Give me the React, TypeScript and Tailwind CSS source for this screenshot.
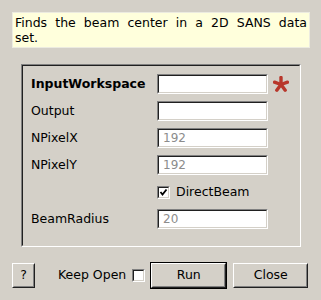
import React from "react";

const font = { fontFamily: '"DejaVu Sans", "Liberation Sans", sans-serif' };

const Sunken = ({ children, className = "" }: { children?: React.ReactNode; className?: string }) => (
  <div className={`border border-t-[#808080] border-l-[#808080] border-b-white border-r-white ${className}`}>
    <div className="h-full w-full border border-t-[#202020] border-l-[#202020] border-b-[#d4d0c8] border-r-[#d4d0c8] bg-white">
      {children}
    </div>
  </div>
);

const Field = ({ value }: { value?: string }) => (
  <Sunken className="w-[111px] h-[20px]">
    <div className="flex h-full items-center pl-[4px] text-[12px] leading-none text-[#8c8c8c]">{value}</div>
  </Sunken>
);

const CheckBox = ({ checked }: { checked?: boolean }) => (
  <Sunken className="w-[13px] h-[13px]">
    {checked && (
      <svg width="9" height="9" viewBox="0 0 9 9" className="block">
        <path d="M1.5 4 L3.5 6.5 L7.5 1.5" fill="none" stroke="#000" strokeWidth="1.8" />
      </svg>
    )}
  </Sunken>
);

const Button = ({ label, className = "", isDefault }: { label: string; className?: string; isDefault?: boolean }) => {
  const inner = (
    <div className="h-full w-full border border-t-white border-l-white border-b-[#202020] border-r-[#202020]">
      <div className="flex h-full w-full items-center justify-center border border-t-[#d4d0c8] border-l-[#d4d0c8] border-b-[#808080] border-r-[#808080] text-[12.5px]">
        {label}
      </div>
    </div>
  );
  if (isDefault) {
    return <div className={`border border-black ${className}`}>{inner}</div>;
  }
  return <div className={className}>{inner}</div>;
};

const Asterisk = () => (
  <svg width="16" height="16" viewBox="0 0 16 16" className="block">
    <g stroke="#b8372b" strokeWidth="3.4" strokeLinecap="round">
      <line x1="8" y1="8.5" x2="8" y2="1.5" />
      <line x1="8" y1="8.5" x2="14.5" y2="6.2" />
      <line x1="8" y1="8.5" x2="12.2" y2="14.2" />
      <line x1="8" y1="8.5" x2="3.8" y2="14.2" />
      <line x1="8" y1="8.5" x2="1.5" y2="6.2" />
    </g>
  </svg>
);

const rows = [
  { label: "InputWorkspace", bold: true, required: true },
  { label: "Output" },
  { label: "NPixelX", value: "192" },
  { label: "NPixelY", value: "192" },
];

export default function App() {
  return (
    <div className="w-[321px] h-[300px] bg-[#d4d0c8] text-black flex flex-col pt-[12px]" style={font}>
      <div className="ml-[12px] w-[298px] h-[36px] border border-[#ecebe0] bg-[#ffffdc] px-[2px] pt-[2px] text-[12.5px] leading-[15px]">
        <div className="text-justify [text-align-last:justify]">Finds the beam center in a 2D SANS data</div>
        <div>set.</div>
      </div>

      <div className="ml-[21px] mt-[16px] w-[280px] h-[183px] border border-t-[#808080] border-l-[#808080] border-b-white border-r-white">
        <div className="h-full w-full border border-t-[#202020] border-l-[#202020] border-b-[#d4d0c8] border-r-[#d4d0c8] pl-[8px] pt-[8px] flex flex-col gap-[7px]">
          {rows.map(({ label, bold, required, value }) => (
            <div key={label} className="flex h-[20px] items-center">
              <span className={`w-[126px] text-[12.5px] ${bold ? "font-bold" : ""}`}>{label}</span>
              <Field value={value} />
              {required && (
                <span className="ml-[5px]">
                  <Asterisk />
                </span>
              )}
            </div>
          ))}
          <div className="flex h-[20px] items-center pl-[126px] gap-[6px]">
            <CheckBox checked />
            <span className="text-[12.5px]">DirectBeam</span>
          </div>
          <div className="flex h-[20px] items-center">
            <span className="w-[126px] text-[12.5px]">BeamRadius</span>
            <Field value="20" />
          </div>
        </div>
      </div>

      <div className="mt-[15px] flex items-center pl-[12px]">
        <Button label="?" className="w-[23px] h-[25px]" />
        <span className="ml-[23px] text-[12.5px]">Keep Open</span>
        <span className="ml-[6px]">
          <CheckBox />
        </span>
        <Button label="Run" isDefault className="ml-[5px] w-[77px] h-[27px]" />
        <Button label="Close" className="ml-[6px] w-[75px] h-[25px]" />
      </div>
    </div>
  );
}
